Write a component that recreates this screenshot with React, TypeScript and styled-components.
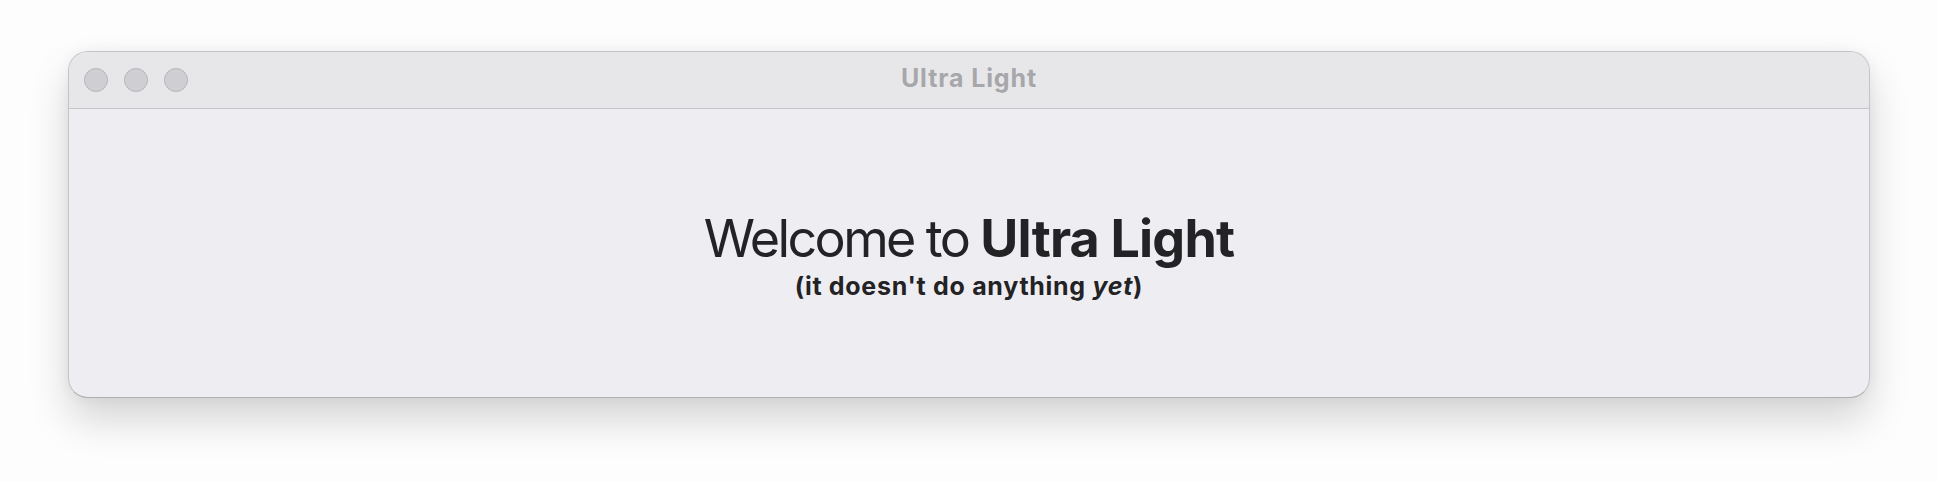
import React from "react";
import styled, { createGlobalStyle } from "styled-components";

const GlobalStyle = createGlobalStyle`
  html, body {
    margin: 0;
    padding: 0;
    background: #fdfdfd;
    font-family: Inter, "Noto Sans", sans-serif;
  }
  #root {
    width: 1938px;
    height: 482px;
  }
`;

const Stage = styled.div`
  width: 1938px;
  height: 482px;
  padding: 51px 0 0 68px;
  box-sizing: border-box;
`;

const Window = styled.div`
  width: 1802px;
  height: 347px;
  box-sizing: border-box;
  border: 1px solid #c4c4c8;
  border-bottom-color: #aeaeb2;
  border-radius: 20px;
  background: #eeedf2;
  overflow: hidden;
  display: flex;
  flex-direction: column;
  box-shadow: 0 22px 40px rgba(0, 0, 0, 0.16), 0 0 14px rgba(0, 0, 0, 0.05);
`;

const TitleBar = styled.div`
  position: relative;
  height: 56px;
  flex: none;
  box-sizing: content-box;
  background: #e7e7ea;
  border-bottom: 1px solid #c6c6ca;
  display: flex;
  align-items: center;
  justify-content: center;
`;

const Lights = styled.div`
  position: absolute;
  left: 15px;
  top: 16px;
  display: flex;
  gap: 16px;
`;

const Light = styled.span`
  width: 24px;
  height: 24px;
  box-sizing: border-box;
  border-radius: 50%;
  background: #cfcfd3;
  border: 1px solid #b6b6ba;
`;

const Title = styled.h1`
  margin: 0 0 4px;
  font-size: 25px;
  line-height: 30px;
  font-weight: 700;
  color: #a7a7ab;
  letter-spacing: 0.9px;
`;

const Content = styled.main`
  flex: 1;
  display: flex;
  flex-direction: column;
  align-items: center;
  justify-content: center;
  padding-top: 5px;
  color: #232325;
`;

const Heading = styled.div`
  font-size: 52px;
  font-weight: 400;
  line-height: 60px;
  letter-spacing: -2.6px;
  b {
    font-weight: 700;
    letter-spacing: -0.8px;
  }
`;

const Sub = styled.div`
  font-size: 25px;
  font-weight: 700;
  line-height: 34px;
  letter-spacing: 0.7px;
  i {
    font-style: italic;
  }
`;

export default function App() {
  return (
    <>
      <GlobalStyle />
      <Stage>
        <Window>
          <TitleBar>
            <Lights>
              <Light />
              <Light />
              <Light />
            </Lights>
            <Title>Ultra Light</Title>
          </TitleBar>
          <Content>
            <Heading>
              Welcome to <b>Ultra Light</b>
            </Heading>
            <Sub>
              (it doesn't do anything <i>yet</i>)
            </Sub>
          </Content>
        </Window>
      </Stage>
    </>
  );
}
